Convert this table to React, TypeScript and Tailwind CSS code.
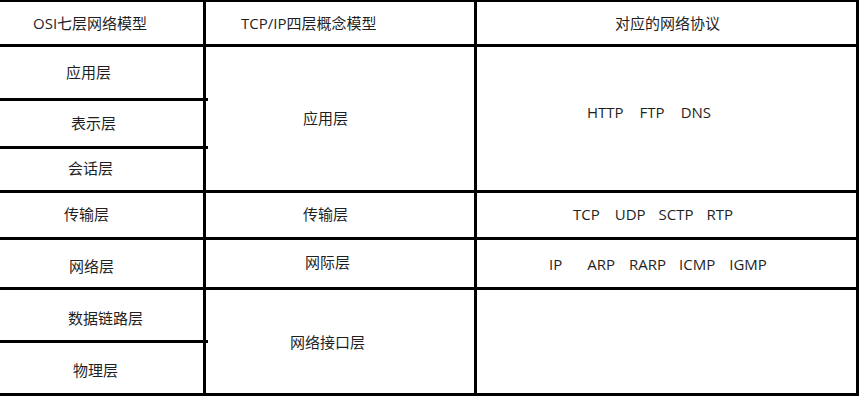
const font = { fontFamily: '"Open Sans", "Noto Sans CJK SC", sans-serif' };

type LeftRow = { label: string; pl: string; h: string; shift?: string; tick?: boolean };

const osiRows: LeftRow[] = [
  { label: "应用层", pl: "pl-[66px]", h: "row-start-2", tick: true },
  { label: "表示层", pl: "pl-[71px]", h: "row-start-3", tick: true },
  { label: "会话层", pl: "pl-[68px]", h: "row-start-4", shift: "pb-[2px]" },
  { label: "传输层", pl: "pl-[64px]", h: "row-start-5", shift: "pb-[2px]" },
  { label: "网络层", pl: "pl-[69px]", h: "row-start-6", shift: "pt-[5px]" },
  { label: "数据链路层", pl: "pl-[68px]", h: "row-start-7", shift: "pt-[6px]", tick: true },
  { label: "物理层", pl: "pl-[73px]", h: "row-start-8", shift: "pt-[4px]" },
];

const Cell = ({
  className,
  children,
  tick,
}: {
  className: string;
  children: React.ReactNode;
  tick?: boolean;
}) => (
  <div className={`relative flex items-center bg-white ${className}`}>
    {children}
    {tick && <span className="absolute right-[-5px] bottom-[-3px] z-10 h-[3px] w-[2px] bg-black" />}
  </div>
);

const App: React.FC = () => {
  return (
    <div className="h-[396px] w-[860px] bg-white" style={font}>
      <div
        className="grid h-[396px] w-[859px] grid-cols-[203px_268px_379px] grid-rows-[42px_51px_45px_41px_44px_47px_50px_50px] gap-[3px] bg-black pt-[2px] pr-[3px] pb-[3px] text-[15px] leading-none text-[#1f1f1f]"
      >
        {/* header */}
        <Cell className="col-start-1 row-start-1 pl-[33px]">OSI七层网络模型</Cell>
        <Cell className="col-start-2 row-start-1 pl-[35px]">TCP/IP四层概念模型</Cell>
        <Cell className="col-start-3 row-start-1 pl-[138px]">对应的网络协议</Cell>

        {/* OSI seven layers */}
        {osiRows.map((row) => (
          <Cell key={row.label} className={`col-start-1 ${row.h} ${row.pl} ${row.shift ?? ""}`} tick={row.tick}>
            {row.label}
          </Cell>
        ))}

        {/* TCP/IP four layers */}
        <Cell className="col-start-2 row-start-2 row-span-3 pl-[97px]">应用层</Cell>
        <Cell className="col-start-2 row-start-5 pl-[97px] pb-[2px]">传输层</Cell>
        <Cell className="col-start-2 row-start-6 pl-[99px] pb-[2px]">网际层</Cell>
        <Cell className="col-start-2 row-start-7 row-span-2 pl-[84px] pt-[2px]">网络接口层</Cell>

        {/* protocols */}
        <Cell className="col-start-3 row-start-2 row-span-3 pl-[110px] pb-[12px]">
          <span>HTTP</span>
          <span className="ml-[16px]">FTP</span>
          <span className="ml-[16px]">DNS</span>
        </Cell>
        <Cell className="col-start-3 row-start-5 pl-[96px] pb-[2px]">
          <span>TCP</span>
          <span className="ml-[15px]">UDP</span>
          <span className="ml-[13px]">SCTP</span>
          <span className="ml-[13px]">RTP</span>
        </Cell>
        <Cell className="col-start-3 row-start-6 pl-[72px] pt-[2px]">
          <span>IP</span>
          <span className="ml-[25px]">ARP</span>
          <span className="ml-[14px]">RARP</span>
          <span className="ml-[13px]">ICMP</span>
          <span className="ml-[14px]">IGMP</span>
        </Cell>
        <Cell className="col-start-3 row-start-7 row-span-2">{null}</Cell>
      </div>
    </div>
  );
};

export default App;
